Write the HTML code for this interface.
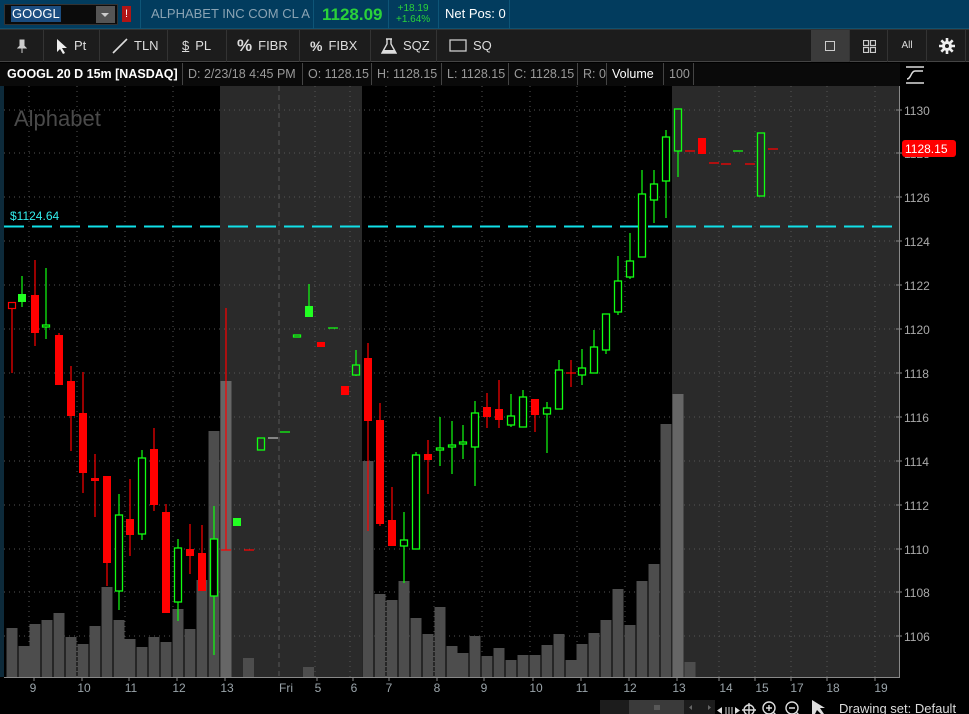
<!DOCTYPE html>
<html><head><meta charset="utf-8"><style>
*{margin:0;padding:0;box-sizing:border-box}
body{width:969px;height:714px;overflow:hidden;background:#000;font-family:"Liberation Sans",sans-serif;position:relative;color:#ccc}
.abs{position:absolute}
#top{left:0;top:0;width:969px;height:29px;background:#023c5e;border-bottom:1px solid #10506e}
#tb{left:0;top:29px;width:969px;height:33px;background:#1c1c1c;border-top:1px solid #333;border-bottom:1px solid #444}
.btn{position:absolute;top:0;height:32px;border-right:1px solid #333;color:#ddd;font-size:13px;line-height:32px;display:flex;align-items:center;gap:6px;padding-left:10px}
#info{left:0;top:63px;width:900px;height:23px;background:#0a0a0a;font-size:12.5px;line-height:22px;color:#999}
.c{position:absolute;top:0;height:22px;border-right:1px solid #444;padding-left:5px;white-space:nowrap}
.r{fill:#f00}.g{fill:none;stroke:#1f1;stroke-width:1.3}.gf{fill:#2f2}
</style></head><body>
<div id="top" class="abs">
 <div class="abs" style="left:4px;top:4px;width:114px;height:21px;background:#0b0b0b;border:1px solid #333"></div>
 <div class="abs" style="left:11px;top:6px;height:16px;background:#1b4d80;color:#fff;font-size:13px;line-height:16px;padding:0 1px">GOOGL</div>
 <div class="abs" style="left:96px;top:6px;width:19px;height:17px;background:#555"></div>
 <div class="abs" style="left:101px;top:13px;width:0;height:0;border-left:4px solid transparent;border-right:4px solid transparent;border-top:4px solid #ccc"></div>
 <div class="abs" style="left:122px;top:6px;width:9px;height:16px;background:#b01515;color:#fff;font-size:11px;line-height:16px;text-align:center">!</div>
 <div class="abs" style="left:140px;top:0;width:1px;height:29px;background:#0e5577"></div>
 <div class="abs" style="left:151px;top:6px;font-size:13px;color:#8aa3b3">ALPHABET INC COM CL A</div>
 <div class="abs" style="left:313px;top:0;width:1px;height:29px;background:#0e5577"></div>
 <div class="abs" style="left:322px;top:5px;font-size:17px;font-weight:bold;color:#2ad23a">1128.09</div>
 <div class="abs" style="left:388px;top:0;width:1px;height:29px;background:#0e5577"></div>
 <div class="abs" style="left:396px;top:3px;font-size:10px;line-height:11px;color:#2ad23a;text-align:center">+18.19<br>+1.64%</div>
 <div class="abs" style="left:438px;top:0;width:1px;height:29px;background:#0e5577"></div>
 <div class="abs" style="left:445px;top:6px;font-size:13px;color:#fff">Net Pos: 0</div>
 <div class="abs" style="left:509px;top:0;width:1px;height:29px;background:#0e5577"></div>
</div>
<div id="tb" class="abs">
 <div class="btn" style="left:0;width:44px;padding-left:17px"><svg width="10" height="14"><path d="M3 1h4v6l2 2H1l2-2z M5 9v5" fill="#ccc" stroke="#ccc"/></svg></div>
 <div class="btn" style="left:44px;width:56px;padding-left:12px"><svg width="12" height="16"><path d="M1 1v13l3-3 3 5 2-1-3-5h5z" fill="#eee"/></svg>Pt</div>
 <div class="btn" style="left:100px;width:68px;padding-left:12px"><svg width="16" height="16"><path d="M1 15L15 1" stroke="#ddd" stroke-width="1.6"/></svg>TLN</div>
 <div class="btn" style="left:168px;width:59px;padding-left:14px"><span style="text-decoration:underline;font-size:13px">$</span>PL</div>
 <div class="btn" style="left:227px;width:73px;padding-left:10px"><b style="font-size:17px">%</b>FIBR</div>
 <div class="btn" style="left:300px;width:71px;padding-left:10px"><b style="font-size:14px">%</b>FIBX</div>
 <div class="btn" style="left:371px;width:66px;padding-left:10px"><svg width="16" height="16"><path d="M5 1h6M6 1v5L1 15h14L10 6V1" fill="none" stroke="#ddd" stroke-width="1.4"/><path d="M3 12h10l2 3H1z" fill="#ddd"/></svg>SQZ</div>
 <div class="btn" style="left:437px;width:63px;padding-left:12px;border-right:none"><svg width="18" height="14"><rect x="1" y="1" width="16" height="11" fill="none" stroke="#ccc" stroke-width="1.3"/></svg>SQ</div>
 <div class="abs" style="left:811px;top:0;width:38px;height:32px;background:#3b3b3b"><div class="abs" style="left:14px;top:11px;width:10px;height:10px;border:1.5px solid #ccc"></div></div>
 <div class="abs" style="left:849px;top:0;width:38px;height:32px;border-left:1px solid #333"><svg class="abs" style="left:13px;top:10px" width="13" height="13"><g fill="none" stroke="#ccc" stroke-width="1.2"><rect x=".5" y=".5" width="5" height="5"/><rect x="7.5" y=".5" width="5" height="5"/><rect x=".5" y="7.5" width="5" height="5"/><rect x="7.5" y="7.5" width="5" height="5"/></g></svg></div>
 <div class="abs" style="left:887px;top:0;width:39px;height:32px;border-left:1px solid #333;color:#ddd;font-size:10px;line-height:32px;text-align:center">All</div>
 <div class="abs" style="left:926px;top:0;width:40px;height:32px;border-left:1px solid #333;border-right:1px solid #333"><svg class="abs" style="left:11px;top:7px" width="18" height="18" viewBox="0 0 18 18"><g stroke="#eee" stroke-width="2.6"><path d="M9 1v16M1 9h16M3.3 3.3l11.4 11.4M14.7 3.3L3.3 14.7"/></g><circle cx="9" cy="9" r="5" fill="#eee"/><circle cx="9" cy="9" r="2" fill="#1c1c1c"/></svg></div>
</div>
<div id="info" class="abs">
 <div class="c" style="left:0;width:183px;color:#fff;font-weight:bold;padding-left:7px">GOOGL 20 D 15m [NASDAQ]</div>
 <div class="c" style="left:183px;width:120px">D: 2/23/18 4:45 PM</div>
 <div class="c" style="left:303px;width:69px">O: 1128.15</div>
 <div class="c" style="left:372px;width:70px">H: 1128.15</div>
 <div class="c" style="left:442px;width:67px">L: 1128.15</div>
 <div class="c" style="left:509px;width:69px">C: 1128.15</div>
 <div class="c" style="left:578px;width:29px">R: 0</div>
 <div class="c" style="left:607px;width:57px;color:#fff">Volume</div>
 <div class="c" style="left:664px;width:30px">100</div>
</div>
<svg class="abs" style="left:905px;top:66px" width="20" height="18"><path d="M1 1h18M1 17h18M2 13c4 0 4-8 8-8s4 0 8 0" fill="none" stroke="#ddd" stroke-width="1.4"/></svg>

<svg class="abs" style="left:0;top:0" width="969" height="714" viewBox="0 0 969 714">
 <rect x="0" y="86" width="4" height="591" fill="#0d2a3a"/>
 <rect x="220" y="86" width="142" height="591" fill="#2a2a2a"/>
 <rect x="672" y="86" width="227" height="591" fill="#2a2a2a"/>
 <text x="14" y="126" font-size="22" fill="#4a4a4a" font-family="Liberation Sans">Alphabet</text>
 <g stroke="#555" stroke-width="1" stroke-dasharray="1,4">
  <path d="M4 110H899M4 153H899M4 197H899M4 241H899M4 285H899M4 329H899M4 373H899M4 417H899M4 461H899M4 505H899M4 549H899M4 592H899M4 636H899"/>
  <path d="M29 86V677M77 86V677M125 86V677M173 86V677M315 86V677M350 86V677M386 86V677M434 86V677M482 86V677M530 86V677M577 86V677M625 86V677M719 86V677M755 86V677M791 86V677M827 86V677M875 86V677"/>
 </g>
 <path d="M279 86V677" stroke="#555" stroke-dasharray="5,4"/>
 <g fill="#4d4d4d">
  <rect x="6.5" y="628" width="11" height="49"/><rect x="18.5" y="646" width="11" height="31"/><rect x="29.5" y="624" width="11" height="53"/><rect x="41.5" y="620" width="11" height="57"/><rect x="53.5" y="613" width="11" height="64"/><rect x="65.5" y="637" width="11" height="40"/><rect x="77.5" y="644" width="11" height="33"/><rect x="89.5" y="626" width="11" height="51"/><rect x="101.5" y="587" width="11" height="90"/><rect x="113.5" y="620" width="11" height="57"/><rect x="124.5" y="639" width="11" height="38"/><rect x="136.5" y="647" width="11" height="30"/><rect x="148.5" y="637" width="11" height="40"/><rect x="160.5" y="642" width="11" height="35"/><rect x="172.5" y="609" width="11" height="68"/><rect x="184.5" y="629" width="11" height="48"/><rect x="196.5" y="580" width="11" height="97"/><rect x="208.5" y="431" width="11" height="246"/>
  <rect x="243" y="658" width="11" height="19"/><rect x="303" y="667" width="11" height="10"/>
  <rect x="362.5" y="461" width="11" height="216"/><rect x="374.5" y="594" width="11" height="83"/><rect x="386.5" y="600" width="11" height="77"/><rect x="398.5" y="581" width="11" height="96"/><rect x="410.5" y="618" width="11" height="59"/><rect x="422.5" y="634" width="11" height="43"/><rect x="434.5" y="607" width="11" height="70"/><rect x="446.5" y="646" width="11" height="31"/><rect x="457.5" y="653" width="11" height="24"/><rect x="469.5" y="636" width="11" height="41"/><rect x="481.5" y="656" width="11" height="21"/><rect x="493.5" y="648" width="11" height="29"/><rect x="505.5" y="660" width="11" height="17"/><rect x="517.5" y="655" width="11" height="22"/><rect x="529.5" y="655" width="11" height="22"/><rect x="541.5" y="645" width="11" height="32"/><rect x="553.5" y="634" width="11" height="43"/><rect x="565.5" y="660" width="11" height="17"/><rect x="576.5" y="644" width="11" height="33"/><rect x="588.5" y="633" width="11" height="44"/><rect x="600.5" y="620" width="11" height="57"/><rect x="612.5" y="589" width="11" height="88"/><rect x="624.5" y="625" width="11" height="52"/><rect x="636.5" y="581" width="11" height="96"/><rect x="648.5" y="564" width="11" height="113"/><rect x="660.5" y="424" width="11" height="253"/><rect x="684.5" y="662" width="11" height="15"/>
 </g>
 <g fill="#666"><rect x="220.5" y="381" width="11" height="296"/><rect x="672.5" y="394" width="11" height="283"/></g>
 <text x="10" y="220" font-size="12" fill="#3ee" font-family="Liberation Sans">$1124.64</text>
 <path d="M4 226.5H899" stroke="#11e0e8" stroke-width="2" stroke-dasharray="20,8"/>
 <path fill="none" stroke="#f00" stroke-width="1.2" d="M12 302V373M35 260V346M59 333V385M71 366V451M83 372V493M95 454V517M107 476V586M130 479V556M154 428V511M166 504V613M190 524V574M202 525V591M226 308V550M368 343V531M380 403V526M392 487V546M428 440V494M487 393V428M499 380V428M535 399V432M571 360V387M221 550H231M244 550H254M566 373H576M685 151H695M709 163H719M721 164H731M745 164H755M768 149H778"/>
 <path fill="none" stroke="#1f1" stroke-width="1.2" d="M22 276V307M46 268V339M119 494V610M142 450V540M178 539V621M214 506V655M309 284V317M356 350V376M404 512V583M416 452V549M440 417V466M452 421V474M463 425V459M475 401V486M511 394V427M523 390V427M547 402V453M559 360V409M582 349V385M594 330V373M606 314V354M618 256V315M630 233V279M642 170V257M654 170V223M666 130V218M678 109V177M280 432H290M328 328H338M733 151H743"/>
 <path d="M268 438H278" stroke="#ddd"/>
 <g class="r"><rect x="31" y="295" width="8" height="38"/><rect x="55" y="335" width="8" height="50"/><rect x="67" y="381" width="8" height="35"/><rect x="79" y="413" width="8" height="60"/><rect x="91" y="478" width="8" height="3"/><rect x="103" y="476" width="8" height="87"/><rect x="126" y="519" width="8" height="16"/><rect x="150" y="449" width="8" height="56"/><rect x="162" y="512" width="8" height="101"/><rect x="186" y="549" width="8" height="7"/><rect x="198" y="553" width="8" height="38"/><rect x="317" y="342" width="8" height="5"/><rect x="341" y="386" width="8" height="9"/><rect x="364" y="358" width="8" height="63"/><rect x="376" y="420" width="8" height="104"/><rect x="388" y="520" width="8" height="26"/><rect x="424" y="454" width="8" height="6"/><rect x="483" y="407" width="8" height="10"/><rect x="495" y="409" width="8" height="11"/><rect x="531" y="399" width="8" height="16"/><rect x="698" y="138" width="8" height="16"/></g>
 <rect x="8.5" y="302.5" width="7" height="6" fill="#000" stroke="#f00" stroke-width="1.2"/>
 <g class="gf"><rect x="18" y="294" width="8" height="8"/><rect x="233" y="518" width="8" height="8"/><rect x="305" y="306" width="8" height="11"/></g>
 <g class="g" style="fill:#000"><rect x="42.5" y="325" width="7" height="2"/><rect x="115.5" y="515" width="7" height="76"/><rect x="138.5" y="458" width="7" height="76"/><rect x="174.5" y="548" width="7" height="54"/><rect x="210.5" y="539" width="7" height="57"/><rect x="257.5" y="438" width="7" height="12" style="fill:#2a2a2a"/><rect x="293.5" y="335" width="7" height="2" style="fill:#2a2a2a"/><rect x="352.5" y="365" width="7" height="10" style="fill:#2a2a2a"/><rect x="400.5" y="540" width="7" height="6"/><rect x="412.5" y="455" width="7" height="94"/><rect x="436.5" y="448" width="7" height="2"/><rect x="448.5" y="445" width="7" height="2"/><rect x="459.5" y="442" width="7" height="2"/><rect x="471.5" y="413" width="7" height="34"/><rect x="507.5" y="416" width="7" height="9"/><rect x="519.5" y="397" width="7" height="30"/><rect x="543.5" y="408" width="7" height="6"/><rect x="555.5" y="370" width="7" height="39"/><rect x="578.5" y="368" width="7" height="7"/><rect x="590.5" y="347" width="7" height="26"/><rect x="602.5" y="314" width="7" height="36"/><rect x="614.5" y="281" width="7" height="31"/><rect x="626.5" y="261" width="7" height="16"/><rect x="638.5" y="194" width="7" height="63"/><rect x="650.5" y="184" width="7" height="16"/><rect x="662.5" y="137" width="7" height="44"/><rect x="674.5" y="109" width="7" height="42" style="fill:#2a2a2a"/><rect x="757.5" y="133" width="7" height="63" style="fill:#2a2a2a"/></g>
 <path d="M4 677.5H900M899.5 86V677" stroke="#888"/>
 <path d="M896 110H902M896 153H902M896 197H902M896 241H902M896 285H902M896 329H902M896 373H902M896 417H902M896 461H902M896 505H902M896 549H902M896 592H902M896 636H902" stroke="#888"/>
 <g font-size="12" fill="#aaa" font-family="Liberation Sans">
  <text x="904" y="115">1130</text><text x="904" y="158">1128</text><text x="904" y="202">1126</text><text x="904" y="246">1124</text><text x="904" y="290">1122</text><text x="904" y="334">1120</text><text x="904" y="378">1118</text><text x="904" y="422">1116</text><text x="904" y="466">1114</text><text x="904" y="510">1112</text><text x="904" y="554">1110</text><text x="904" y="597">1108</text><text x="904" y="641">1106</text>
 </g>
 <rect x="902" y="140" width="54" height="17" rx="3" fill="#f00"/>
 <text x="905" y="153" font-size="12" fill="#fff" font-family="Liberation Sans">1128.15</text>
 <g font-size="12" fill="#9aa4aa" font-family="Liberation Sans" text-anchor="middle">
  <text x="33" y="692">9</text><text x="84" y="692">10</text><text x="131" y="692">11</text><text x="179" y="692">12</text><text x="227" y="692">13</text><text x="286" y="692">Fri</text><text x="318" y="692">5</text><text x="354" y="692">6</text><text x="389" y="692">7</text><text x="437" y="692">8</text><text x="484" y="692">9</text><text x="536" y="692">10</text><text x="582" y="692">11</text><text x="630" y="692">12</text><text x="679" y="692">13</text><text x="726" y="692">14</text><text x="762" y="692">15</text><text x="797" y="692">17</text><text x="833" y="692">18</text><text x="881" y="692">19</text>
 </g>
 <path d="M34 677V681M82 677V681M129 677V681M177 677V681M225 677V681M317 677V681M353 677V681M389 677V681M437 677V681M484 677V681M533 677V681M581 677V681M629 677V681M677 677V681M719 677V681M755 677V681M791 677V681M827 677V681M875 677V681" stroke="#888"/>
 <rect x="600" y="700" width="115" height="14" fill="#1c1c1c"/>
 <rect x="629" y="700" width="55" height="14" fill="#3a3a3a"/>
 <path d="M655 705v5M657 705v5M659 705v5" stroke="#777"/>
 <path d="M692 705l-3 2.5 3 2.5zM708 705l3 2.5-3 2.5z" fill="#666"/>
 <path d="M722 707l-5 3.5 5 3.5zM735 707l5 3.5-5 3.5z" fill="#ddd"/><path d="M726 707v7M729 707v7M732 707v7" stroke="#ddd"/>
 <g fill="none" stroke="#ddd" stroke-width="1.4"><circle cx="749" cy="710" r="5"/><path d="M742 710h14M749 703v11"/><circle cx="769" cy="708" r="6"/><path d="M766 708h6M769 705v6M773 712l3 3"/><circle cx="792" cy="708" r="6"/><path d="M789 708h6M796 712l3 3"/></g>
 <path d="M812 700v14h3l2-4 4 4h3l-4-6h5z" fill="#ddd"/>
 <text x="839" y="713" font-size="13" fill="#ddd" font-family="Liberation Sans">Drawing set: Default</text>
</svg>
</body></html>
